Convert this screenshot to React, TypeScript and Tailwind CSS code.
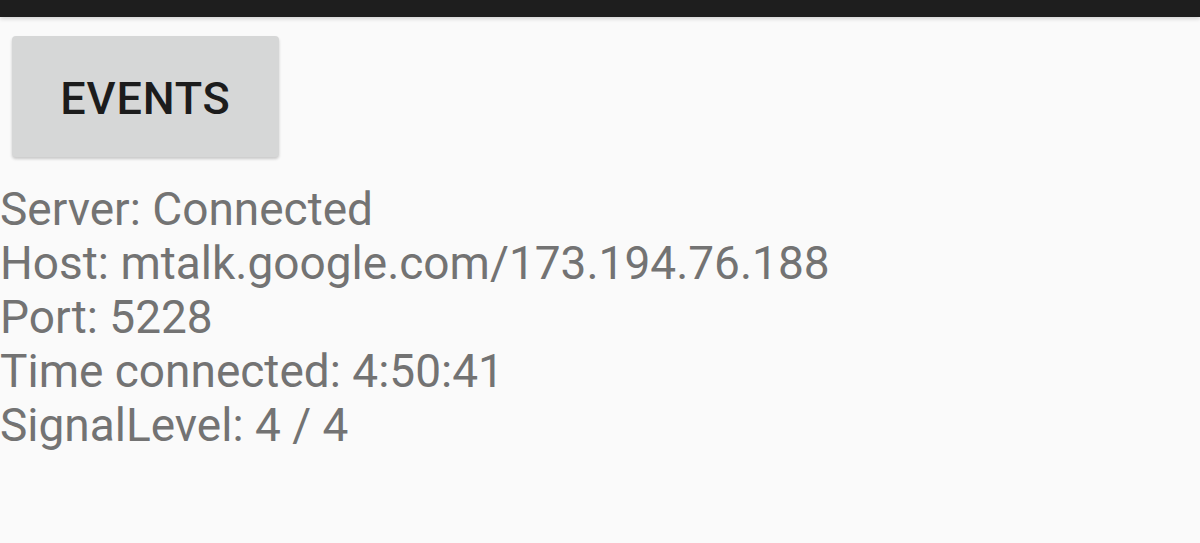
export default function App() {
  const lines = [
    'Server: Connected',
    'Host: mtalk.google.com/173.194.76.188',
    'Port: 5228',
    'Time connected: 4:50:41',
    'SignalLevel: 4 / 4',
  ];

  return (
    <div className="w-[1200px] h-[543px] bg-[#fafafa] overflow-hidden font-['Roboto',sans-serif]">
      <div className="h-[17px] bg-[#1e1e1e] shadow-[0_2px_4px_rgba(0,0,0,0.15)]" />
      <div className="pt-[19px] pl-[12px]">
        <button className="w-[267px] h-[121px] pt-[4px] rounded-[4px] bg-[#d6d7d7] shadow-[0_2px_3px_rgba(0,0,0,0.2)] text-[45px] font-medium text-[#1c1c1c] tracking-[0.8px]">
          EVENTS
        </button>
      </div>
      <div className="mt-[25px] text-[46px] leading-[54px] text-[#737373]">
        {lines.map(line => (
          <div key={line}>{line}</div>
        ))}
      </div>
    </div>
  );
}
